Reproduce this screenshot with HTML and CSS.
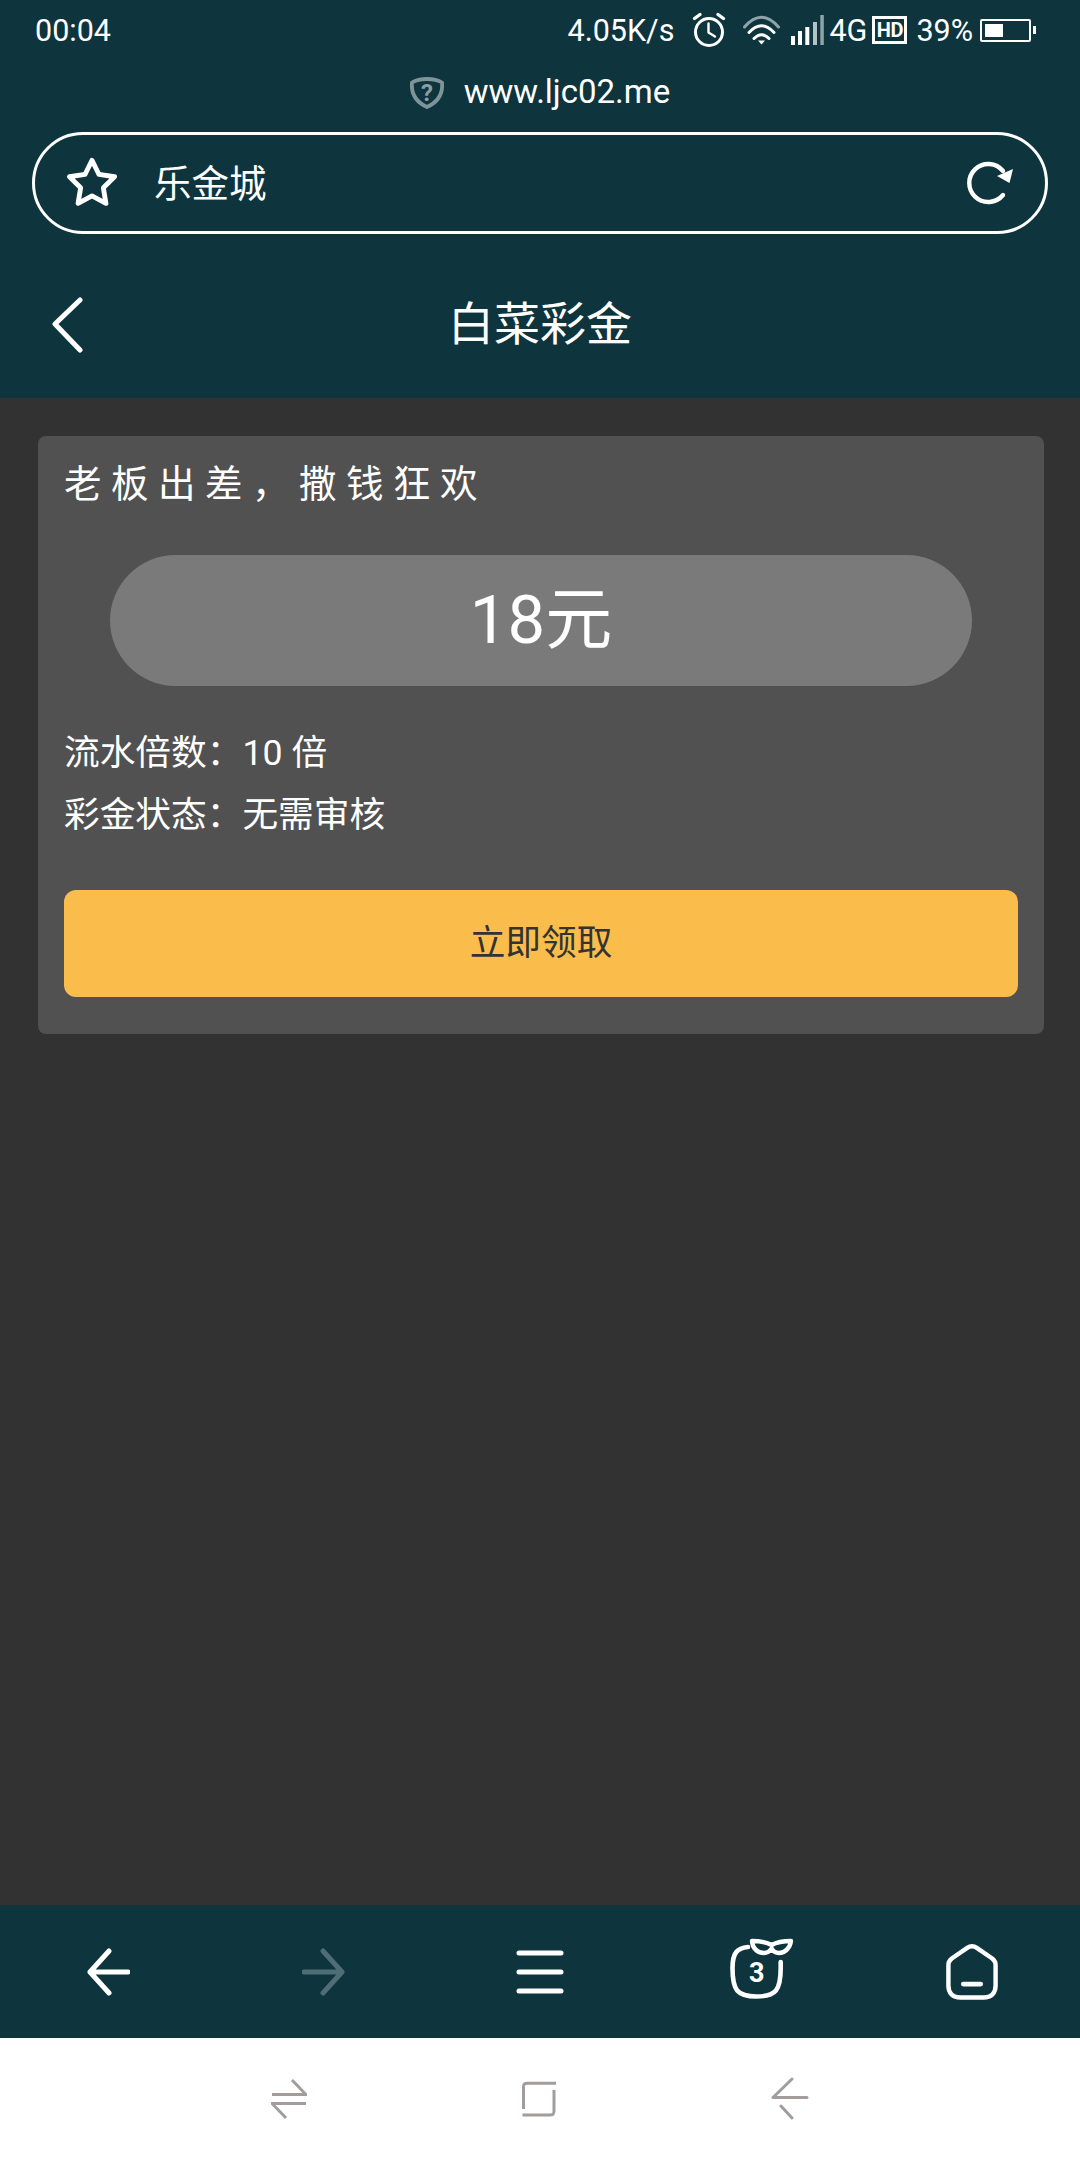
FILE: index.html
```html
<!DOCTYPE html>
<html lang="zh-CN">

<head>
    <meta charset="UTF-8">
    <meta name="viewport" content="width=device-width, initial-scale=1.0">
    <title>白菜彩金</title>
    <link rel="stylesheet" href="styles.css">
</head>

<body>
    <div class="phone">
        <header class="top">
            <div class="status">
                <span class="time">00:04</span>
                <div class="status-right">
                    <span class="speed">4.05K/s</span>
                    <svg class="ic-alarm" width="34" height="36" viewBox="0 0 34 36" fill="none" stroke="#fff" stroke-width="3" stroke-linecap="round" stroke-linejoin="round">
                        <circle cx="17" cy="20" r="13.5" />
                        <path d="M16.500 11.500V20.500L23 24.500" stroke-width="2.400" />
                        <path d="M2.500 6.500L8 2.500M31.500 6.500L26 2.500" stroke-width="3.400" />
                    </svg>
                    <svg class="ic-wifi" width="38" height="30" viewBox="0 0 38 30" fill="none" stroke="#fff" stroke-width="3" stroke-linecap="round">
                        <path d="M1.500 12Q18.500 -7.500 35.500 12" stroke="#8fa3a8" />
                        <path d="M6 17.500Q18.500 4 31 17.500" />
                        <path d="M11 23.500Q18.500 16 26 23.500" />
                        <path d="M15 25.500H22L18.500 29.500Z" fill="#fff" stroke="none" />
                    </svg>
                    <svg class="ic-signal" width="33" height="30" viewBox="0 0 33 30" fill="#fff">
                        <rect x="0" y="21" width="4" height="9" />
                        <rect x="7" y="16" width="4" height="14" />
                        <rect x="14.300" y="12" width="4" height="18" />
                        <rect x="22" y="7" width="4" height="23" fill="#b5c2c5" />
                        <rect x="29.300" y="0" width="3.500" height="30" fill="#8fa3a8" />
                    </svg>
                    <span class="net">4G</span>
                    <span class="hd">HD</span>
                    <span class="percent">39%</span>
                    <div class="battery">
                        <div class="battery-body">
                            <div class="battery-fill"></div>
                        </div>
                        <div class="battery-tip"></div>
                    </div>
                </div>
            </div>

            <div class="url-row">
                <svg class="ic-shield" width="34" height="32" viewBox="0 0 34 32" fill="none" stroke="#7f9499" stroke-width="3.800" stroke-linejoin="round">
                    <path d="M17 2C21 2 28 3 32 5.500C33 16 28 25 17 30C6 25 1 16 2 5.500C6 3 13 2 17 2Z" />
                    <text class="shield-mark" x="17" y="24" text-anchor="middle">?</text>
                </svg>
                <span class="url">www.ljc02.me</span>
            </div>

            <div class="search">
                <svg width="54" height="54" viewBox="0 0 50 50" fill="none" stroke="#fff" stroke-width="4.500" stroke-linejoin="round">
                    <path d="M25 4L31.500 17.100L45.900 19.200L35.500 29.400L37.900 43.800L25 37L12.100 43.800L14.500 29.400L4.100 19.200L18.500 17.100Z" />
                </svg>
                <span class="search-text">乐金城</span>
                <svg width="48" height="50" viewBox="0 0 48 50" fill="none" stroke="#fff" stroke-width="4.400">
                    <path d="M36 13A19 19 0 1 0 36 37" stroke-linecap="round" />
                    <path d="M30 18L46 11L42.500 25Z" fill="#fff" stroke="none" />
                </svg>
            </div>

            <div class="title-bar">
                <svg class="ic-back" width="36" height="56" viewBox="0 0 36 56" fill="none" stroke="#fff" stroke-width="5" stroke-linecap="round" stroke-linejoin="round">
                    <path d="M30 3L5 27L30 53" />
                </svg>
                <h1>白菜彩金</h1>
            </div>
        </header>

        <main class="content">
            <section class="card">
                <h2>老板出差，撒钱狂欢</h2>
                <div class="amount">18元</div>
                <p class="info first">流水倍数：10 倍</p>
                <p class="info">彩金状态：无需审核</p>
                <button class="claim">立即领取</button>
            </section>
        </main>

        <nav class="toolbar">
            <div class="tool">
                <svg width="44" height="48" viewBox="0 0 44 48" fill="none" stroke="#fff" stroke-width="5" stroke-linecap="round" stroke-linejoin="round">
                    <path d="M23 3L4 24L23 45M4 24H42" />
                </svg>
            </div>
            <div class="tool">
                <svg width="44" height="48" viewBox="0 0 44 48" fill="none" stroke="#4f6d74" stroke-width="5" stroke-linecap="round" stroke-linejoin="round">
                    <path d="M21 3L40 24L21 45M40 24H2" />
                </svg>
            </div>
            <div class="tool">
                <svg width="48" height="44" viewBox="0 0 48 44" fill="none" stroke="#fff" stroke-width="5" stroke-linecap="round">
                    <path d="M3 3H45M3 22H45M3 41H45" />
                </svg>
            </div>
            <div class="tool">
                <svg class="ic-tabs" width="66" height="67" viewBox="0 0 66 67" fill="none" stroke="#fff" stroke-width="4.600" stroke-linecap="round" stroke-linejoin="round">
                    <path d="M19 9C8 10 3.500 15 3.500 30C3.500 52 8 58.500 27.500 58.500C47 58.500 51.700 52 51.700 30V24" />
                    <path d="M23 3C30 3 37 4 42.700 7C48 4 55 3 62 3C61 10 56 15 50 15C46 15 44 13 42.700 10.500C41 13 38 15 35 15C28 15 23.500 10 23 3Z" stroke-width="4.400" fill="#0e343e" />
                    <text class="tab-count" x="27.700" y="44" text-anchor="middle">3</text>
                </svg>
            </div>
            <div class="tool">
                <svg width="52" height="56" viewBox="0 0 54 58" fill="none" stroke="#fff" stroke-width="4.600" stroke-linecap="round" stroke-linejoin="round">
                    <path d="M22 4L6 15C3.500 17 2.500 19 2.500 22V43C2.500 51 7 55.500 15 55.500H39C47 55.500 51.500 51 51.500 43V22C51.500 19 50.500 17 48 15L32 4C29 2 25 2 22 4Z" />
                    <path d="M18 41.500H36" stroke-width="5" />
                </svg>
            </div>
        </nav>

        <nav class="system-nav">
            <svg width="36" height="42" viewBox="0 0 36 42" fill="none" stroke="#a39c9c" stroke-width="3">
                <path d="M1 16.500H35L21 2M35 25.500H1L15 40" />
            </svg>
            <svg width="36" height="38" viewBox="0 0 36 38" fill="none" stroke="#a39c9c" stroke-width="3">
                <path d="M2.500 29V6.500C2.500 4 4 3.300 6 3.300H35M1.500 35H29C32 35 33 34 33 31V10" />
            </svg>
            <svg width="38" height="44" viewBox="0 0 38 44" fill="none" stroke="#a39c9c" stroke-width="3" stroke-linecap="round" stroke-linejoin="round">
                <path d="M21 2L2 20.500H36M10 29L21 41" />
            </svg>
        </nav>
    </div>
</body>

</html>
```

FILE: styles.css
```css
* {
    padding: 0;
    margin: 0;
    box-sizing: border-box;
}

body {
    font-family: Roboto, "Noto Sans CJK SC", sans-serif;
    color: #fff;
    background: #323232;
}

svg {
    display: block;
    flex-shrink: 0;
}

.phone {
    width: 1080px;
    height: 2160px;
    display: flex;
    flex-direction: column;
}

.top {
    height: 398px;
    background: #0e343e;
}

.status {
    height: 60px;
    padding: 0 44px 0 35px;
    display: flex;
    justify-content: space-between;
    align-items: center;
    font-size: 30.500px;
}

.status-right {
    display: flex;
    align-items: center;
}

.ic-alarm {
    margin-left: 18px;
}

.ic-wifi {
    margin-left: 17px;
}

.ic-signal {
    margin-left: 10px;
}

.net {
    margin-left: 5px;
}

.hd {
    width: 35px;
    height: 28px;
    margin-left: 5px;
    border: 3px solid #fff;
    font-size: 20px;
    font-weight: 700;
    line-height: 22px;
    text-align: center;
    letter-spacing: -0.500px;
}

.percent {
    margin-left: 9px;
}

.battery {
    display: flex;
    align-items: center;
    margin-left: 7px;
}

.battery-body {
    width: 51px;
    height: 23px;
    padding: 3px;
    border: 2px solid #fff;
    border-radius: 2px;
}

.battery-fill {
    width: 18px;
    height: 100%;
    background: #fff;
}

.battery-tip {
    width: 3px;
    height: 8px;
    margin-left: 2px;
    background: #fff;
}

.url-row {
    height: 62px;
    display: flex;
    justify-content: center;
    align-items: center;
    gap: 20px;
}

.ic-shield {
    margin-top: 3px;
}

.shield-mark {
    font-size: 24px;
    font-weight: 700;
    fill: #8a9ea3;
    stroke: none;
}

.url {
    font-size: 33px;
}

.search {
    height: 102px;
    margin: 10px 32px 0;
    padding: 0 30px;
    display: flex;
    align-items: center;
    border: 3px solid #fff;
    border-radius: 51px;
}

.search-text {
    margin-left: 35px;
    padding-bottom: 5px;
    font-size: 37.500px;
    flex: 1;
}

.title-bar {
    position: relative;
    height: 150px;
    margin-top: 14px;
    padding-bottom: 6px;
    display: flex;
    justify-content: center;
    align-items: center;
}

.ic-back {
    position: absolute;
    left: 50px;
    top: 49px;
}

h1 {
    font-size: 46px;
    font-weight: 400;
}

.content {
    flex: 1;
    padding: 38px 36px 0 38px;
    background: #323232;
}

.card {
    padding: 23px 26px 37px;
    background: #515151;
    border-radius: 8px;
}

h2 {
    font-size: 37.500px;
    font-weight: 400;
    line-height: 50px;
    letter-spacing: 9.500px;
}

.amount {
    height: 131px;
    margin: 46px 46px 0;
    background: #7a7a7a;
    border-radius: 66px;
    font-size: 67px;
    line-height: 131px;
    text-align: center;
}

.info {
    font-size: 35.700px;
    line-height: 62px;
}

.first {
    margin-top: 36px;
}

.claim {
    display: block;
    width: 954px;
    height: 107px;
    margin-top: 44px;
    padding-bottom: 9px;
    border: none;
    border-radius: 12px;
    background: #fabd4c;
    color: #333333;
    font-family: inherit;
    font-size: 35.700px;
}

.toolbar {
    height: 133px;
    background: #0e343e;
    display: grid;
    grid-template-columns: repeat(5, 216px);
    align-items: center;
}

.tool {
    display: flex;
    justify-content: center;
}

.ic-tabs {
    margin-left: 12px;
}

.tab-count {
    font-size: 27px;
    font-weight: 700;
    fill: #fff;
    stroke: none;
}

.system-nav {
    height: 122px;
    background: #fff;
    display: flex;
    justify-content: center;
    align-items: center;
    gap: 214px;
}
```
